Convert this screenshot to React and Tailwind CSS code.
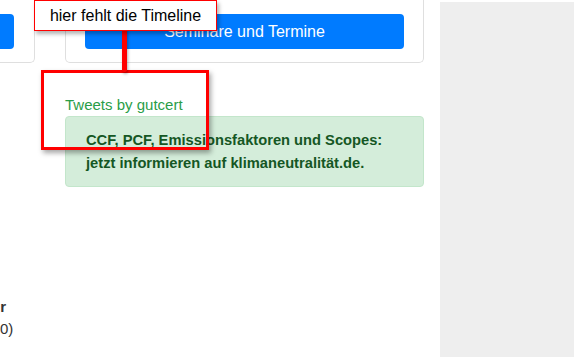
import React from 'react';

const App = () => {
    return (
        <div className="relative w-[574px] h-[358px] overflow-hidden bg-white font-['Liberation_Sans',Arial,sans-serif]">
            <div className="flex h-full">
                <div className="flex w-[440px] shrink-0">
                    {/* cut-off column on the left */}
                    <div className="w-[35px] shrink-0 flex flex-col">
                        <div className="-mt-[10px] h-[73px] border-r border-b border-[#dfdfdf] rounded-br-[5px] pr-[20px] pt-[24px]">
                            <div className="h-[35px] bg-[#007bff] rounded-r-[4px]"></div>
                        </div>
                        <div className="mt-[233px] text-right text-[15px] leading-[22px] text-[#333]">
                            <div className="font-bold pr-[29px]">r</div>
                            <div className="pr-[27px]">0)</div>
                        </div>
                    </div>

                    <div className="ml-[30px] w-[359px] shrink-0 flex flex-col">
                        <div className="-mt-[10px] border-x border-b border-[#dfdfdf] rounded-b-[5px] px-[19px] pt-[24px] pb-[13px]">
                            <button className="w-full h-[35px] bg-[#007bff] rounded-[4px] text-white text-[16px]">
                                Seminare und Termine
                            </button>
                        </div>
                        <div className="mt-[32px] text-[15px] leading-[20px] text-[#2a9d48]">Tweets by gutcert</div>
                        <div className="mt-[1px] h-[71px] border border-[#c3e6cb] bg-[#d4edda] rounded-[4px] px-[20px] pt-[12px] text-[14.7px] leading-[23px] font-bold text-[#155724]">
                            <div>CCF, PCF, Emissionsfaktoren und Scopes:</div>
                            <div>jetzt informieren auf klimaneutralität.de.</div>
                        </div>
                    </div>
                </div>

                <div className="flex-1 pt-[2px] pb-[1px]">
                    <div className="h-full bg-[#eeeeee]"></div>
                </div>
            </div>

            {/* annotation overlay */}
            <div className="absolute left-[41px] top-[70px] w-[168px] h-[80px] border-[3px] border-[#ff0000] shadow-[2px_3px_5px_rgba(0,0,0,0.35)]"></div>
            <div className="absolute left-[122px] top-[28px] w-[5px] h-[44px] bg-[#ff0000] rounded-b-[2px] shadow-[1px_2px_3px_rgba(0,0,0,0.3)]"></div>
            <div className="absolute left-[34px] top-0 w-[183px] h-[31px] bg-white border-[1.5px] border-[#ff0000] shadow-[2px_3px_4px_rgba(0,0,0,0.3)] flex items-center justify-center text-[16px] text-black">
                hier fehlt die Timeline
            </div>
        </div>
    );
};

export default App;
